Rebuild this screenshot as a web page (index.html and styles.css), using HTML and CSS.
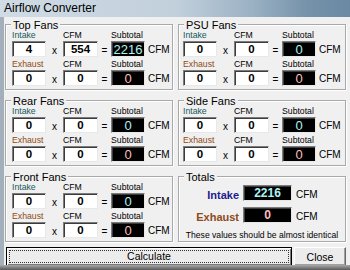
FILE: index.html
```html
<!DOCTYPE html>
<html lang="en">
<head>
    <meta charset="UTF-8">
    <title>Airflow Converter</title>
    <link rel="stylesheet" href="styles.css">
</head>
<body>
    <div class="window">
        <div class="titlebar">Airflow Converter</div>
        <div class="client">
            <div class="groups">
                <div class="group">
                    <div class="group-title">Top Fans</div>
                    <div class="fan-grid">
                        <span class="lbl intake">Intake</span><span class="lbl col3">CFM</span><span class="lbl col5">Subtotal</span>
                        <div class="field first">4</div><span class="op">x</span><div class="field">554</div><span class="op">=</span><div class="result in">2216</div><span class="unit">CFM</span>
                        <span class="lbl exhaust">Exhaust</span><span class="lbl col3">CFM</span><span class="lbl col5">Subtotal</span>
                        <div class="field first">0</div><span class="op">x</span><div class="field">0</div><span class="op">=</span><div class="result out">0</div><span class="unit">CFM</span>
                    </div>
                </div>
                <div class="group">
                    <div class="group-title">PSU Fans</div>
                    <div class="fan-grid">
                        <span class="lbl intake">Intake</span><span class="lbl col3">CFM</span><span class="lbl col5">Subtotal</span>
                        <div class="field first">0</div><span class="op">x</span><div class="field">0</div><span class="op">=</span><div class="result in">0</div><span class="unit">CFM</span>
                        <span class="lbl exhaust">Exhaust</span><span class="lbl col3">CFM</span><span class="lbl col5">Subtotal</span>
                        <div class="field first">0</div><span class="op">x</span><div class="field">0</div><span class="op">=</span><div class="result out">0</div><span class="unit">CFM</span>
                    </div>
                </div>
                <div class="group">
                    <div class="group-title">Rear Fans</div>
                    <div class="fan-grid">
                        <span class="lbl intake">Intake</span><span class="lbl col3">CFM</span><span class="lbl col5">Subtotal</span>
                        <div class="field first">0</div><span class="op">x</span><div class="field">0</div><span class="op">=</span><div class="result in">0</div><span class="unit">CFM</span>
                        <span class="lbl exhaust">Exhaust</span><span class="lbl col3">CFM</span><span class="lbl col5">Subtotal</span>
                        <div class="field first">0</div><span class="op">x</span><div class="field">0</div><span class="op">=</span><div class="result out">0</div><span class="unit">CFM</span>
                    </div>
                </div>
                <div class="group">
                    <div class="group-title">Side Fans</div>
                    <div class="fan-grid">
                        <span class="lbl intake">Intake</span><span class="lbl col3">CFM</span><span class="lbl col5">Subtotal</span>
                        <div class="field first">0</div><span class="op">x</span><div class="field">0</div><span class="op">=</span><div class="result in">0</div><span class="unit">CFM</span>
                        <span class="lbl exhaust">Exhaust</span><span class="lbl col3">CFM</span><span class="lbl col5">Subtotal</span>
                        <div class="field first">0</div><span class="op">x</span><div class="field">0</div><span class="op">=</span><div class="result out">0</div><span class="unit">CFM</span>
                    </div>
                </div>
                <div class="group">
                    <div class="group-title">Front Fans</div>
                    <div class="fan-grid">
                        <span class="lbl intake">Intake</span><span class="lbl col3">CFM</span><span class="lbl col5">Subtotal</span>
                        <div class="field first">0</div><span class="op">x</span><div class="field">0</div><span class="op">=</span><div class="result in">0</div><span class="unit">CFM</span>
                        <span class="lbl exhaust">Exhaust</span><span class="lbl col3">CFM</span><span class="lbl col5">Subtotal</span>
                        <div class="field first">0</div><span class="op">x</span><div class="field">0</div><span class="op">=</span><div class="result out">0</div><span class="unit">CFM</span>
                    </div>
                </div>
                <div class="group totals">
                    <div class="group-title">Totals</div>
                    <div class="totals-grid">
                        <span class="total-lbl intake">Intake</span><div class="total-box in">2216</div><span class="unit">CFM</span>
                        <span class="total-lbl exhaust">Exhaust</span><div class="total-box out">0</div><span class="unit">CFM</span>
                    </div>
                    <p class="note">These values should be almost identical</p>
                </div>
            </div>
            <div class="buttons">
                <button class="btn default"><span class="focus">Calculate</span></button>
                <button class="btn">Close</button>
            </div>
        </div>
        <div class="frame-bottom"></div>
    </div>
</body>
</html>
```

FILE: styles.css
```css
* { margin: 0; padding: 0; box-sizing: border-box; }
body {
    width: 350px;
    height: 270px;
    overflow: hidden;
    font-family: 'Liberation Sans', Arial, sans-serif;
    background: #505050;
}
.window {
    height: 270px;
    display: flex;
    flex-direction: column;
}
.titlebar {
    height: 17px;
    padding-left: 4px;
    font-size: 12px;
    line-height: 17px;
    color: #000;
    background: linear-gradient(90deg, #cfdbe5 0%, #c2d0dc 50%, #9bb1c4 72%, #7592aa 88%, #6b89a3 100%);
}
.client {
    flex: 1;
    background: #f0f0f0;
    border-left: 4px solid #a3b0bc;
    padding: 7px 4px 0 1px;
}
.frame-bottom {
    height: 5px;
    background: linear-gradient(#a9a9a9, #5a5a5a);
}
.groups {
    display: grid;
    grid-template-columns: 1fr 1fr;
    grid-template-rows: 66px 66px 66px;
    column-gap: 5px;
    row-gap: 10px;
}
.group {
    position: relative;
    border: 1px solid #a9a9a9;
    box-shadow: 1px 1px 0 #fff, inset 1px 1px 0 #fff;
    padding: 5px 0 0 6px;
}
.group:nth-child(even) { padding-left: 4px; }
.group-title {
    position: absolute;
    top: -6px;
    left: 5px;
    padding: 0 2px;
    background: #f0f0f0;
    font-size: 11px;
    line-height: 13px;
    color: #000;
}
.fan-grid {
    display: grid;
    grid-template-columns: 34px 17px 35px 13px 34px auto;
    grid-template-rows: 11px 16px 13px 16px;
    align-items: center;
}
.lbl {
    font-size: 8.7px;
    line-height: 11px;
    color: #000;
    align-self: end;
    white-space: nowrap;
}
.lbl.intake, .lbl.exhaust, .field.first { grid-column: 1; }
.lbl.col3 { grid-column: 3; }
.lbl.col5 { grid-column: 5; }
.intake { color: #175a5a; }
.exhaust { color: #8e4a12; }
.field, .result, .total-box {
    height: 16px;
    border: 1px solid;
    border-color: #7c7c7c #e8e8e8 #e8e8e8 #7c7c7c;
    box-shadow: inset 1px 1px 0 #3c3c3c;
    text-align: center;
}
.field {
    background: #fff;
    font-size: 11.5px;
    font-weight: bold;
    line-height: 15px;
    color: #000;
}
.result {
    background: #000;
    font-size: 13px;
    line-height: 15px;
}
.result.in, .total-box.in { color: #aef2f2; }
.result.out, .total-box.out { color: #ffbcbc; }
.op {
    font-size: 10px;
    text-align: center;
    color: #000;
    padding-top: 2px;
}
.unit {
    font-size: 10px;
    color: #000;
    padding-left: 3px;
}
.totals-grid {
    display: grid;
    grid-template-columns: 60px 49px auto;
    grid-template-rows: 16px 16px;
    column-gap: 4px;
    row-gap: 6px;
    align-items: center;
    margin: 3px 0 0 -4px;
}
.total-lbl {
    font-size: 11px;
    font-weight: bold;
    text-align: right;
    padding-top: 3px;
}
.total-lbl.intake { color: #1c1c8e; }
.total-lbl.exhaust { color: #8d4a1c; }
.total-box {
    background: #000;
    font-size: 12px;
    font-weight: bold;
    line-height: 14px;
}
.totals .unit { padding-left: 0; padding-top: 2px; }
.note {
    margin: 7px 0 0 -4px;
    font-size: 8.6px;
    line-height: 11px;
    text-align: center;
    color: #000;
}
.buttons {
    display: grid;
    grid-template-columns: 1fr 52px;
    column-gap: 2px;
    margin: 5px 0 0 1px;
    height: 17px;
}
.btn {
    font-family: 'Liberation Sans', Arial, sans-serif;
    font-size: 10.5px;
    color: #000;
    background: #ececec;
    border: 1px solid;
    border-color: #fff #6a6a6a #6a6a6a #fff;
    box-shadow: inset -1px -1px 0 #a0a0a0;
}
.btn.default {
    border: 1px solid #000;
    box-shadow: inset 1px 1px 0 #fff, inset -1px -1px 0 #7a7a7a;
    padding: 2px;
}
.focus {
    display: block;
    height: 100%;
    border: 1px dotted #333;
    line-height: 11px;
}
```
